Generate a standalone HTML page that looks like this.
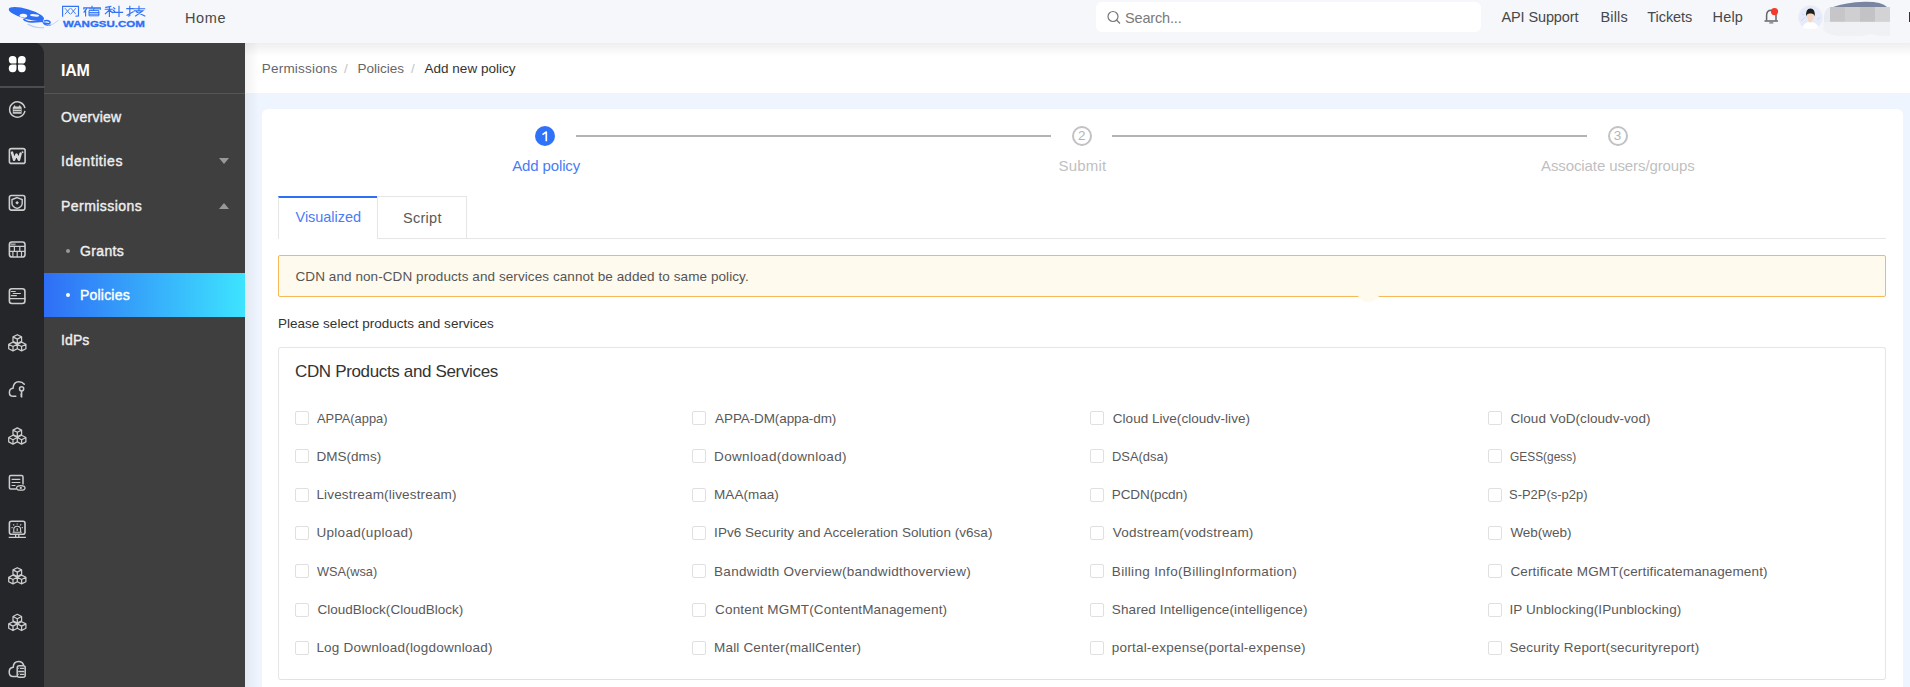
<!DOCTYPE html>
<html><head><meta charset="utf-8">
<style>
*{margin:0;padding:0;box-sizing:border-box}
html,body{width:1910px;height:687px;overflow:hidden;background:#eff5fe;font-family:"Liberation Sans",sans-serif;position:relative}
.a{position:absolute;white-space:nowrap;line-height:1}
#hdr{position:absolute;left:0;top:0;width:1910px;height:42.5px;background:#f5f7fb;z-index:5}
#rail{position:absolute;left:0;top:42px;width:44px;height:645px;background:#25262a;z-index:3;border-radius:0 12px 0 0}
#menu{position:absolute;left:44px;top:42px;width:201px;height:645px;background:#3f3f3f;z-index:2}
#crumb{position:absolute;left:245px;top:42px;width:1665px;height:51px;background:#fff}
#card{position:absolute;left:261.5px;top:109.3px;width:1641.5px;height:600px;background:#fff;border-radius:6px}
.cb{position:absolute;width:14px;height:14px;border:1px solid #e0e0e0;border-radius:2px;background:#fff}
.lbl{position:absolute;font-size:13.5px;color:#595959;line-height:1;white-space:nowrap;letter-spacing:0.25px}
</style></head>
<body>
<div id="hdr">
  <!-- logo -->
  <svg class="a" style="left:0;top:0" width="62" height="34" viewBox="0 0 62 34">
    <ellipse cx="26.4" cy="14" rx="18.3" ry="4.9" transform="rotate(16 26.4 14)" fill="#2f6ff6"/>
    <ellipse cx="23.4" cy="15.7" rx="3.9" ry="1.9" transform="rotate(6 23.4 15.7)" fill="#f5f7fb"/>
    <ellipse cx="34.6" cy="15.4" rx="4.6" ry="1.2" transform="rotate(5 34.6 15.4)" fill="#f5f7fb"/>
    <path d="M23.5 19 Q26.5 22.3 33 21.8 L43 21" stroke="#2f6ff6" stroke-width="1.8" fill="none"/>
    <path d="M43.5 21.2 Q47 19.5 49.8 21.6 Q51 23 48.5 23.6 L43.5 22.8 Q45 25.5 50.5 25.2" stroke="#2f6ff6" stroke-width="1.4" fill="none"/>
    <path d="M27.5 24 Q36 28.6 44 27.6" stroke="#b5ccfb" stroke-width="1.1" fill="none"/>
    <path d="M48 25.8 Q54 24.5 58.7 20" stroke="#b5ccfb" stroke-width="0.8" fill="none"/>
  </svg>
  <svg class="a" style="left:0;top:0" width="150" height="34" viewBox="0 0 150 34"><g stroke="#3273f6" stroke-width="1.15" fill="none" stroke-linecap="square">
    <path d="M62.6 16.2 V6.4 H78.5 V15.9 L76 16.2"/>
    <path d="M65.3 8.6 L69.8 13.8 M69.8 8.6 L65.2 13.9 M71.2 8.6 L75.5 13.8 M75.5 8.6 L71 13.9" stroke-width="0.9"/>
    <path d="M92 6.2 V7.6 M83.8 9 V7.8 H100.3 V9.1"/>
    <path d="M86.6 8.6 L84 12.2 M85.6 10.6 V16"/>
    <path d="M89.3 8.9 H99 M94 8.9 L93.2 10.4 M89.5 10.6 H98.8 V15.8 H89.5Z M89.5 12.6 H98.8 M89.5 14.2 H98.8" stroke-width="1"/>
    <path d="M110.8 6.4 L105.8 7.4 M105.3 9.2 H112.2 M109.4 6.8 V16.3 M109.2 10 L105.3 13.8 M109.8 10.2 L112.3 12.6"/>
    <path d="M113.6 7.8 L114.8 8.8 M113.4 10.2 L114.6 11.2 M112.6 12.3 H122.6 M119 6.3 V16.3"/>
    <path d="M126.8 8.6 H133 M129.8 6.3 V15.6 L128.6 16 M127 15.3 L133.2 11.8"/>
    <path d="M133.6 8.7 H144.6 M139 6.3 V10.6 M134.4 10.8 H142.8 L135.6 16 M136.6 12 L144.8 16"/>
  </g></svg>
  <div class="a" style="left:63px;top:20.2px;font-size:9px;font-weight:700;color:#2f6ff6;transform:scaleX(1.28);transform-origin:left;-webkit-text-stroke:0.3px #2f6ff6">WANGSU.COM</div>
  <div class="a" style="left:185px;top:11.03px;font-size:14.5px;color:#484848;letter-spacing:0.6px">Home</div>
  <!-- search -->
  <div class="a" style="left:1096px;top:2px;width:385px;height:30px;background:#fff;border-radius:6px"></div>
  <svg class="a" style="left:1106px;top:10px" width="16" height="16" viewBox="0 0 16 16"><circle cx="7" cy="6.5" r="5" stroke="#777" stroke-width="1.2" fill="none"/><path d="M10.5 10 L14 13.5" stroke="#777" stroke-width="1.3"/></svg>
  <div class="a" style="left:1125px;top:11.03px;font-size:14.5px;color:#7a7a7a;letter-spacing:-0.17px">Search...</div>
  <div class="a" style="left:1501.5px;top:9.83px;font-size:14.5px;color:#484848;letter-spacing:-0.12px">API Support</div>
  <div class="a" style="left:1600.5px;top:9.83px;font-size:14.5px;color:#484848;letter-spacing:0.15px">Bills</div>
  <div class="a" style="left:1647.3px;top:9.83px;font-size:14.5px;color:#484848;letter-spacing:-0.07px">Tickets</div>
  <div class="a" style="left:1712.5px;top:9.83px;font-size:14.5px;color:#484848;letter-spacing:0.2px">Help</div>
  <svg class="a" style="left:1763px;top:5px" width="18" height="20" viewBox="0 0 18 20"><path d="M3.6 15.6 V10.2 Q3.6 5.2 8.3 5.2 Q13 5.2 13 10.2 V15.6" stroke="#666" stroke-width="1.5" fill="none"/><path d="M2 15.9 H14.4" stroke="#666" stroke-width="1.5" stroke-linecap="round"/><path d="M6.8 17.9 H9.8" stroke="#777" stroke-width="1.3" stroke-linecap="round"/><circle cx="11.5" cy="6.6" r="3.6" fill="#f5392a"/></svg>
  <!-- avatar -->
  <div class="a" style="left:1798px;top:5px;width:24.6px;height:24.6px;border-radius:50%;background:#e6eaf9;border:1px solid #eef0fa"></div>
  <svg class="a" style="left:1798px;top:5px" width="25" height="25" viewBox="0 0 25 25">
    <path d="M3 16 L7 12 M19 15 L22 12 M4 9 L6 10" stroke="#cfd8f5" stroke-width="1"/>
    <path d="M4.5 22.5 Q6 17 12.4 17 Q18.8 17 20.3 22.5 Q17 24.6 12.4 24.6 Q7.8 24.6 4.5 22.5Z" fill="#fff"/>
    <path d="M9.2 9 Q9.2 17.5 12.4 17.6 Q15.6 17.5 15.6 9Z" fill="#f7d6c3"/>
    <path d="M8 11.5 Q7.6 3.5 12.4 3.4 Q17.4 3.5 16.8 11.5 Q16 8.3 12.4 8.6 Q9 8.3 8 11.5Z" fill="#1e1e1e"/>
  </svg>
  <svg class="a" style="left:1820px;top:0" width="90" height="40" viewBox="0 0 90 40">
    <path d="M4 22 Q3 9 10 7 H70 V22Z" fill="#e9ebf2"/>
    <path d="M3.6 22 H70 V36 Q60 37 52 34 Q40 37 25 36 Q10 37 3.6 30Z" fill="#f0f1f5"/>
    <path d="M13 7 Q25 2.5 45 1.8 Q62 1.6 67 7Z" fill="#7a86a0"/>
    <rect x="10" y="7" width="15" height="14.8" fill="#c6c6c8"/>
    <rect x="25" y="7" width="15" height="14.8" fill="#cfcfd1"/>
    <rect x="40" y="7" width="15" height="14.8" fill="#c3c3c5"/>
    <rect x="55" y="7" width="15" height="14.8" fill="#d3d3d5"/>
  </svg>
  <div class="a" style="left:1908.5px;top:12px;width:1.5px;height:10px;background:#333"></div>
</div>

<div class="a" style="left:28px;top:42px;width:17px;height:17px;background:#3f3f3f;z-index:2"></div>
<div id="rail">
  <div class="a" style="left:0;top:44px;width:45px;height:1.5px;background:#4b4c50"></div>
</div>
<!--RAILSVG--><svg class="a" style="left:-0.4px;top:0;z-index:4" width="45" height="687" viewBox="0 0 45 687"><g fill="#fff"><path d="M12.4 55.9 H12.9 A3.6 3.6 0 0 1 16.5 59.5 V62.7 A0.8 0.8 0 0 1 15.7 63.5 H12.4 A3.6 3.6 0 0 1 8.8 59.9 V59.5 A3.6 3.6 0 0 1 12.4 55.9Z"/><path d="M21.6 55.9 H22.099999999999998 A3.6 3.6 0 0 1 25.7 59.5 V59.9 A3.6 3.6 0 0 1 22.099999999999998 63.5 H18.8 A0.8 0.8 0 0 1 18.0 62.7 V59.5 A3.6 3.6 0 0 1 21.6 55.9Z"/><path d="M12.4 64.6 H15.7 A0.8 0.8 0 0 1 16.5 65.39999999999999 V68.60000000000001 A3.6 3.6 0 0 1 12.9 72.2 H12.4 A3.6 3.6 0 0 1 8.8 68.60000000000001 V68.19999999999999 A3.6 3.6 0 0 1 12.4 64.6Z"/><path d="M18.8 64.6 H22.099999999999998 A3.6 3.6 0 0 1 25.7 68.19999999999999 V68.60000000000001 A3.6 3.6 0 0 1 22.099999999999998 72.2 H21.6 A3.6 3.6 0 0 1 18.0 68.60000000000001 V65.39999999999999 A0.8 0.8 0 0 1 18.8 64.6Z"/></g><path d="M24.9 108.2 A7.7 7.7 0 1 0 24.9 110.9" stroke="#cdcdcd" fill="none" stroke-width="1.5"/><path d="M12.8 113.8 V107.2 L13.6 106.5 L14.6 104.9 L15.6 106.5 H18.8 L19.8 104.9 L20.8 106.5 L21.6 107.2 V113.8Z" fill="#cdcdcd"/><path d="M13.5 109.3 H21 M13.5 111.6 H21" stroke="#25262a" stroke-width="0.7"/><rect x="9.4" y="148.6" width="15.7" height="14.8" rx="2" stroke="#cdcdcd" fill="none" stroke-width="1.6"/><path d="M12 152.6 L14.1 159.8 L16.5 154.6 L18.9 159.8 L20.6 153.6" stroke="#dadada" stroke-width="2.5" fill="none" stroke-linejoin="round" stroke-linecap="round"/><circle cx="22.5" cy="152.3" r="1" fill="#d0d0d0"/><rect x="9.4" y="195.5" width="15.5" height="14.6" rx="2" stroke="#cdcdcd" fill="none" stroke-width="1.6"/><path d="M17.1 197.6 L22.2 199.6 V203.4 Q22.2 206.8 17.1 208.4 Q12 206.8 12 203.4 V199.6Z" stroke="#cdcdcd" fill="none" stroke-width="1.4"/><path d="M17.1 201 L18.9 202.8 L17.1 204.6 L15.3 202.8Z" fill="#d0d0d0"/><rect x="9.4" y="242" width="15.6" height="15" rx="2.6" stroke="#cdcdcd" fill="none" stroke-width="1.6"/><path d="M10.5 244.4 H15.5" stroke="#9a9a9a" stroke-width="2"/><path d="M9.5 246.4 H25 M9.5 251.3 H25 M14.4 246.4 V251.3 M19.8 246.4 V251.3 M12.9 251.3 V257 M17.2 251.3 V257 M21.5 251.3 V257" stroke="#cdcdcd" fill="none" stroke-width="1.2"/><rect x="9.4" y="288.8" width="15.5" height="14.7" rx="2.5" stroke="#cdcdcd" fill="none" stroke-width="1.6"/><path d="M9.5 298.6 H25 M11.3 291.5 H15.3 M13.2 293.5 H20.4 M11.3 295.6 H16.4" stroke="#cdcdcd" fill="none" stroke-width="1.2" stroke-linecap="round"/><path d="M17.30 334.70 L21.60 336.90 L21.60 341.30 L17.30 343.50 L13.00 341.30 L13.00 336.90Z M13.00 336.90 L17.30 339.10 L21.60 336.90 M17.30 339.10 V343.50 M13.00 342.10 L17.30 344.30 L17.30 348.70 L13.00 350.90 L8.70 348.70 L8.70 344.30Z M8.70 344.30 L13.00 346.50 L17.30 344.30 M13.00 346.50 V350.90 M21.60 342.10 L25.90 344.30 L25.90 348.70 L21.60 350.90 L17.30 348.70 L17.30 344.30Z M17.30 344.30 L21.60 346.50 L25.90 344.30 M21.60 346.50 V350.90" stroke="#cdcdcd" fill="none" stroke-width="1.25" stroke-linejoin="round"/><path d="M17.30 427.90 L21.60 430.10 L21.60 434.50 L17.30 436.70 L13.00 434.50 L13.00 430.10Z M13.00 430.10 L17.30 432.30 L21.60 430.10 M17.30 432.30 V436.70 M13.00 435.30 L17.30 437.50 L17.30 441.90 L13.00 444.10 L8.70 441.90 L8.70 437.50Z M8.70 437.50 L13.00 439.70 L17.30 437.50 M13.00 439.70 V444.10 M21.60 435.30 L25.90 437.50 L25.90 441.90 L21.60 444.10 L17.30 441.90 L17.30 437.50Z M17.30 437.50 L21.60 439.70 L25.90 437.50 M21.60 439.70 V444.10" stroke="#cdcdcd" fill="none" stroke-width="1.25" stroke-linejoin="round"/><path d="M17.30 567.70 L21.60 569.90 L21.60 574.30 L17.30 576.50 L13.00 574.30 L13.00 569.90Z M13.00 569.90 L17.30 572.10 L21.60 569.90 M17.30 572.10 V576.50 M13.00 575.10 L17.30 577.30 L17.30 581.70 L13.00 583.90 L8.70 581.70 L8.70 577.30Z M8.70 577.30 L13.00 579.50 L17.30 577.30 M13.00 579.50 V583.90 M21.60 575.10 L25.90 577.30 L25.90 581.70 L21.60 583.90 L17.30 581.70 L17.30 577.30Z M17.30 577.30 L21.60 579.50 L25.90 577.30 M21.60 579.50 V583.90" stroke="#cdcdcd" fill="none" stroke-width="1.25" stroke-linejoin="round"/><path d="M17.30 614.30 L21.60 616.50 L21.60 620.90 L17.30 623.10 L13.00 620.90 L13.00 616.50Z M13.00 616.50 L17.30 618.70 L21.60 616.50 M17.30 618.70 V623.10 M13.00 621.70 L17.30 623.90 L17.30 628.30 L13.00 630.50 L8.70 628.30 L8.70 623.90Z M8.70 623.90 L13.00 626.10 L17.30 623.90 M13.00 626.10 V630.50 M21.60 621.70 L25.90 623.90 L25.90 628.30 L21.60 630.50 L17.30 628.30 L17.30 623.90Z M17.30 623.90 L21.60 626.10 L25.90 623.90 M21.60 626.10 V630.50" stroke="#cdcdcd" fill="none" stroke-width="1.25" stroke-linejoin="round"/><path d="M15.8 396.3 H13.2 Q9.4 396.3 9.4 392.4 Q9.4 388.6 13 388.2 Q13.6 381.7 18.8 381.7 Q22.4 381.7 24.3 384.2" stroke="#cdcdcd" fill="none" stroke-width="1.5" stroke-linecap="round"/><circle cx="21.6" cy="388.8" r="2.1" stroke="#cdcdcd" fill="none" stroke-width="1.5"/><path d="M21.6 390.9 V397.6 M20.4 394.3 H21.6 M20.4 396 H21.6" stroke="#cdcdcd" fill="none" stroke-width="1.5"/><path d="M16.5 489.1 H10.8 Q9.4 489.1 9.4 487.7 V477 Q9.4 475.6 10.8 475.6 H21.6 Q23 475.6 23 477 V484.5" stroke="#cdcdcd" fill="none" stroke-width="1.5"/><path d="M11.6 479.4 H20.3 M11.6 482.5 H20.3 M11.6 485.5 H15.5" stroke="#cdcdcd" fill="none" stroke-width="1.2"/><ellipse cx="20.8" cy="487.9" rx="4.2" ry="2.3" fill="#25262a" stroke="#cdcdcd" stroke-width="1.3"/><circle cx="20.8" cy="487.9" r="1.1" fill="#cdcdcd"/><rect x="9.4" y="521.3" width="15.6" height="13" rx="2" stroke="#cdcdcd" fill="none" stroke-width="1.6"/><path d="M8.7 537.3 H25.9 M15.6 534.4 V537.3 M18.8 534.4 V537.3" stroke="#cdcdcd" fill="none" stroke-width="1.3"/><path d="M13.8 532 V529.3 Q13.8 526.2 17.2 526.2 Q20.6 526.2 20.6 529.3 V532 M12.6 532.3 H21.8 M17.2 523.4 V524.6 M13.2 524.3 L14.2 525.3 M21.2 524.3 L20.2 525.3 M11.5 527.6 H12.7 M21.7 527.6 H22.9 M17.2 528.3 V531" stroke="#cdcdcd" fill="none" stroke-width="1.1"/><path d="M16.5 676.5 H13 Q9.2 676.5 9.2 672 Q9.2 667.6 13.2 667.2 Q13.6 661.5 18.6 661.5 Q22.4 661.5 23.6 665" stroke="#cdcdcd" fill="none" stroke-width="1.5" stroke-linecap="round"/><rect x="17.2" y="665.7" width="8" height="11.5" rx="2" fill="#25262a" stroke="#cdcdcd" stroke-width="1.5"/><path d="M18.2 668.4 H24.3 M18.2 671.5 H24.3 M18.2 674.4 H24.3" stroke="#cdcdcd" stroke-width="1.3"/><path d="M18.8 668.4 H19.9 M18.8 674.4 H19.9" stroke="#25262a" stroke-width="1.3"/></svg><!--/RAILSVG-->
<div id="menu">
  <div class="a" style="left:17px;top:20.5px;font-size:16px;font-weight:700;color:#fff;letter-spacing:-0.3px">IAM</div>
  <div class="a" style="left:0;top:50.5px;width:201px;height:1px;background:#555"></div>
  <div class="a" style="left:17px;top:67.9px;font-size:14px;color:#eee;letter-spacing:0.27px;-webkit-text-stroke:0.4px currentColor">Overview</div>
  <div class="a" style="left:17px;top:112.3px;font-size:14px;color:#eee;letter-spacing:0.6px;-webkit-text-stroke:0.4px currentColor">Identities</div>
  <div class="a" style="left:17px;top:156.9px;font-size:14px;color:#eee;letter-spacing:0.45px;-webkit-text-stroke:0.4px currentColor">Permissions</div>
  <div class="a" style="left:36px;top:201.6px;font-size:14px;color:#eee;letter-spacing:0.36px;-webkit-text-stroke:0.4px currentColor">Grants</div>
  <div class="a" style="left:0;top:231px;width:201px;height:44px;background:linear-gradient(90deg,#2f6ef6,#3de4ff)"></div>
  <div class="a" style="left:36px;top:246.1px;font-size:14px;color:#fff;letter-spacing:0.2px;-webkit-text-stroke:0.4px currentColor">Policies</div>
  <div class="a" style="left:17px;top:290.6px;font-size:14px;color:#eee;letter-spacing:0.1px;-webkit-text-stroke:0.4px currentColor">IdPs</div>
  <div class="a" style="left:22px;top:206.5px;width:4px;height:4px;border-radius:50%;background:#999"></div>
  <div class="a" style="left:22px;top:251.3px;width:4px;height:4px;border-radius:50%;background:#fff"></div>
  <svg class="a" style="left:175px;top:116px" width="10" height="6"><path d="M0 0 H10 L5 6Z" fill="#999"/></svg>
  <svg class="a" style="left:175px;top:161px" width="10" height="6"><path d="M0 6 H10 L5 0Z" fill="#999"/></svg>
</div>

<div id="crumb">
  <div class="a" style="left:16.8px;top:19.9px;font-size:13.5px;color:#666;letter-spacing:0.2px">Permissions</div>
  <div class="a" style="left:99px;top:19.9px;font-size:13.5px;color:#c4c4c4;letter-spacing:0px">/</div>
  <div class="a" style="left:112.5px;top:19.9px;font-size:13.5px;color:#666;letter-spacing:0px">Policies</div>
  <div class="a" style="left:166px;top:19.9px;font-size:13.5px;color:#c4c4c4;letter-spacing:0px">/</div>
  <div class="a" style="left:179.6px;top:19.9px;font-size:13.5px;color:#333;letter-spacing:0px">Add new policy</div>
</div>

<div id="card"></div>
<div class="a" style="left:245px;top:42px;width:1665px;height:14px;background:linear-gradient(180deg,rgba(0,0,0,0.07),rgba(0,0,0,0))"></div>
<div class="a" style="left:245px;top:42px;width:14px;height:645px;background:linear-gradient(90deg,rgba(0,0,0,0.05),rgba(0,0,0,0))"></div>

<!-- steps -->
<div class="a" style="left:534.8px;top:125.8px;width:20.2px;height:20.2px;border-radius:50%;background:#2e72fa"></div>
<svg class="a" style="left:534.6px;top:125.8px" width="20" height="20" viewBox="0 0 20 20"><path d="M11.3 15.3 V6 L7.5 8.6" stroke="#fff" stroke-width="1.7" fill="none" stroke-linejoin="round"/></svg>
<div class="a" style="left:576px;top:135px;width:475px;height:2px;background:#b3b3b3"></div>
<div class="a" style="left:1071.7px;top:125.8px;width:20px;height:20px;border-radius:50%;border:2px solid #c2c2c2"></div>
<div class="a" style="left:1071.7px;top:129.1px;width:20px;text-align:center;font-size:13.5px;color:#b5b5b5">2</div>
<div class="a" style="left:1112px;top:135px;width:475px;height:2px;background:#b3b3b3"></div>
<div class="a" style="left:1607.5px;top:125.8px;width:20px;height:20px;border-radius:50%;border:2px solid #c2c2c2"></div>
<div class="a" style="left:1607.5px;top:129.1px;width:20px;text-align:center;font-size:13.5px;color:#b5b5b5">3</div>
<div class="a" style="left:512.2px;top:157.7px;font-size:15px;color:#4a7cf6;letter-spacing:-0.13px">Add policy</div>
<div class="a" style="left:1058.5px;top:157.7px;font-size:15px;color:#bfbfbf;letter-spacing:0.2px">Submit</div>
<div class="a" style="left:1541px;top:157.7px;font-size:15px;color:#bfbfbf;letter-spacing:-0.1px">Associate users/groups</div>
<!-- tabs -->
<div class="a" style="left:377px;top:238px;width:1509px;height:1px;background:#e6e6e6"></div>
<div class="a" style="left:278px;top:196px;width:100px;height:43px;background:#fff;border-left:1px solid #e6e6e6;border-top:2px solid #2f6ff6"></div>
<div class="a" style="left:377px;top:196px;width:90px;height:43px;border:1px solid #e6e6e6;border-bottom:none"></div>
<div class="a" style="left:295.5px;top:209.63px;font-size:14.5px;color:#4a7cf6;letter-spacing:-0.03px">Visualized</div>
<div class="a" style="left:403px;top:211.1px;font-size:14.5px;color:#595959;letter-spacing:0.28px">Script</div>
<!-- alert -->
<div class="a" style="left:278px;top:255px;width:1608px;height:42px;background:#fffaee;border:1px solid #f9b857;border-radius:2px"></div>
<div class="a" style="left:1356.5px;top:281px;width:23px;height:21px;border-radius:50%;background:#fffaee"></div>
<div class="a" style="left:295.5px;top:269.57px;font-size:13.5px;color:#555;letter-spacing:0.08px">CDN and non-CDN products and services cannot be added to same policy.</div>
<div class="a" style="left:278px;top:317.17px;font-size:13.5px;color:#333;letter-spacing:0.01px">Please select products and services</div>
<!-- box -->
<div class="a" style="left:278px;top:347px;width:1608px;height:333px;border:1px solid #e6e6e6;border-radius:3px;border-bottom-color:#e2e2e2"></div>
<div class="a" style="left:295px;top:362.71px;font-size:17px;color:#333;letter-spacing:-0.35px">CDN Products and Services</div>
<div class="cb" style="left:295px;top:411px"></div>
<div class="lbl" style="left:317.4px;top:411.97px;letter-spacing:0px;transform:scaleX(0.9514);transform-origin:0 0">APPA(appa)</div>
<div class="cb" style="left:295px;top:449px"></div>
<div class="lbl" style="left:316.4px;top:450.14px;letter-spacing:0.043px">DMS(dms)</div>
<div class="cb" style="left:295px;top:488px"></div>
<div class="lbl" style="left:316.4px;top:488.31px;letter-spacing:0.171px">Livestream(livestream)</div>
<div class="cb" style="left:295px;top:526px"></div>
<div class="lbl" style="left:316.4px;top:526.48px;letter-spacing:0.315px">Upload(upload)</div>
<div class="cb" style="left:295px;top:564px"></div>
<div class="lbl" style="left:317.4px;top:564.65px;letter-spacing:0px;transform:scaleX(0.9444);transform-origin:0 0">WSA(wsa)</div>
<div class="cb" style="left:295px;top:603px"></div>
<div class="lbl" style="left:317.4px;top:602.82px;letter-spacing:0.019px">CloudBlock(CloudBlock)</div>
<div class="cb" style="left:295px;top:641px"></div>
<div class="lbl" style="left:316.4px;top:640.99px;letter-spacing:0.208px">Log Download(logdownload)</div>
<div class="cb" style="left:692px;top:411px"></div>
<div class="lbl" style="left:715.1px;top:411.97px;letter-spacing:-0.107px">APPA-DM(appa-dm)</div>
<div class="cb" style="left:692px;top:449px"></div>
<div class="lbl" style="left:714.1px;top:450.14px;letter-spacing:0.329px">Download(download)</div>
<div class="cb" style="left:692px;top:488px"></div>
<div class="lbl" style="left:714.1px;top:488.31px;letter-spacing:0.029px">MAA(maa)</div>
<div class="cb" style="left:692px;top:526px"></div>
<div class="lbl" style="left:714.1px;top:526.48px;letter-spacing:0.031px">IPv6 Security and Acceleration Solution (v6sa)</div>
<div class="cb" style="left:692px;top:564px"></div>
<div class="lbl" style="left:714.1px;top:564.65px;letter-spacing:0.269px">Bandwidth Overview(bandwidthoverview)</div>
<div class="cb" style="left:692px;top:603px"></div>
<div class="lbl" style="left:715.1px;top:602.82px;letter-spacing:0.153px">Content MGMT(ContentManagement)</div>
<div class="cb" style="left:692px;top:641px"></div>
<div class="lbl" style="left:714.1px;top:640.99px;letter-spacing:0.168px">Mall Center(mallCenter)</div>
<div class="cb" style="left:1090px;top:411px"></div>
<div class="lbl" style="left:1112.8px;top:411.97px;letter-spacing:0.027px">Cloud Live(cloudv-live)</div>
<div class="cb" style="left:1090px;top:449px"></div>
<div class="lbl" style="left:1111.8px;top:450.14px;letter-spacing:0px;transform:scaleX(0.9562);transform-origin:0 0">DSA(dsa)</div>
<div class="cb" style="left:1090px;top:488px"></div>
<div class="lbl" style="left:1111.8px;top:488.31px;letter-spacing:-0.100px">PCDN(pcdn)</div>
<div class="cb" style="left:1090px;top:526px"></div>
<div class="lbl" style="left:1112.8px;top:526.48px;letter-spacing:0.211px">Vodstream(vodstream)</div>
<div class="cb" style="left:1090px;top:564px"></div>
<div class="lbl" style="left:1111.8px;top:564.65px;letter-spacing:0.326px">Billing Info(BillingInformation)</div>
<div class="cb" style="left:1090px;top:603px"></div>
<div class="lbl" style="left:1111.8px;top:602.82px;letter-spacing:0.109px">Shared Intelligence(intelligence)</div>
<div class="cb" style="left:1090px;top:641px"></div>
<div class="lbl" style="left:1111.8px;top:640.99px;letter-spacing:0.214px">portal-expense(portal-expense)</div>
<div class="cb" style="left:1488px;top:411px"></div>
<div class="lbl" style="left:1510.4px;top:411.97px;letter-spacing:0.065px">Cloud VoD(cloudv-vod)</div>
<div class="cb" style="left:1488px;top:449px"></div>
<div class="lbl" style="left:1510.4px;top:450.14px;letter-spacing:0px;transform:scaleX(0.8826);transform-origin:0 0">GESS(gess)</div>
<div class="cb" style="left:1488px;top:488px"></div>
<div class="lbl" style="left:1509.4px;top:488.31px;letter-spacing:0px;transform:scaleX(0.9600);transform-origin:0 0">S-P2P(s-p2p)</div>
<div class="cb" style="left:1488px;top:526px"></div>
<div class="lbl" style="left:1510.4px;top:526.48px;letter-spacing:-0.014px">Web(web)</div>
<div class="cb" style="left:1488px;top:564px"></div>
<div class="lbl" style="left:1510.4px;top:564.65px;letter-spacing:0.155px">Certificate MGMT(certificatemanagement)</div>
<div class="cb" style="left:1488px;top:603px"></div>
<div class="lbl" style="left:1509.4px;top:602.82px;letter-spacing:0.100px">IP Unblocking(IPunblocking)</div>
<div class="cb" style="left:1488px;top:641px"></div>
<div class="lbl" style="left:1509.4px;top:640.99px;letter-spacing:0.203px">Security Report(securityreport)</div>
</body></html>
